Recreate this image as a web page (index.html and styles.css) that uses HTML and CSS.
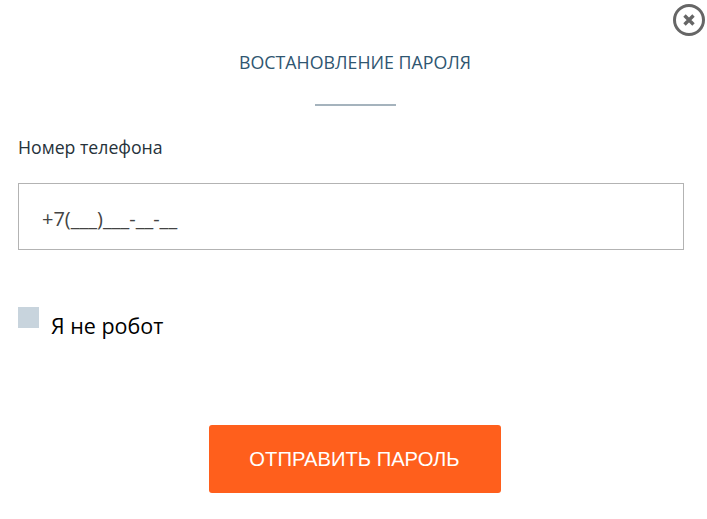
FILE: index.html
```html
<!DOCTYPE html>
<html lang="en">
<head>
	<meta charset="UTF-8">
	<title>Восстановление пароля</title>
	<link rel="stylesheet" href="styles.css">
</head>
<body>
	<div class="popup">
		<a class="close" href="#">
			<svg width="34" height="34" viewBox="0 0 34 34">
				<circle cx="17" cy="17" r="14.5" fill="none" stroke="#666" stroke-width="3"/>
				<path d="M12.5 12.5 L21.5 21.5 M21.5 12.5 L12.5 21.5" fill="none" stroke="#666" stroke-width="3.4"/>
			</svg>
		</a>
		<h2 class="title">ВОСТАНОВЛЕНИЕ ПАРОЛЯ</h2>
		<div class="line"></div>
		<label class="label">Номер телефона</label>
		<div class="field">+7(___)___-__-__</div>
		<div class="robot">
			<span class="check"></span>
			<span class="robot-text">Я не робот</span>
		</div>
		<div class="actions">
			<button class="send">ОТПРАВИТЬ ПАРОЛЬ</button>
		</div>
	</div>
</body>
</html>
```

FILE: styles.css
```css
* {
	margin: 0;
	padding: 0;
	box-sizing: border-box;
}
html, body {
	height: 100%;
	background: #fff;
	overflow: hidden;
}
.popup {
	position: relative;
	width: 707px;
	height: 519px;
	padding: 50px 14px 0 18px;
	font-family: "Open Sans", sans-serif;
}
.close {
	position: absolute;
	top: 3px;
	right: 1px;
	display: block;
	width: 34px;
	height: 34px;
}
.close svg {
	display: block;
}
.title {
	padding-right: 1px;
	font-size: 17.8px;
	line-height: 24px;
	font-weight: 400;
	color: #2f5671;
	text-align: center;
}
.line {
	width: 81px;
	height: 2px;
	margin: 30px auto 0;
	background: #a5b3bd;
}
.label {
	display: block;
	margin-top: 29px;
	font-size: 17.7px;
	line-height: 25px;
	color: #26323a;
}
.field {
	width: 666px;
	height: 67px;
	margin-top: 23px;
	padding-left: 23px;
	border: 1px solid #b3b3b3;
	font-size: 20px;
	line-height: 69px;
	color: #444;
}
.robot {
	display: flex;
	margin-top: 57px;
}
.check {
	width: 21px;
	height: 21px;
	background: #c8d4dd;
}
.robot-text {
	margin: 5px 0 0 12px;
	font-size: 21.5px;
	line-height: 27px;
	color: #000;
}
.actions {
	display: flex;
	justify-content: center;
	margin-top: 86px;
	padding-right: 2px;
}
.send {
	width: 292px;
	height: 68px;
	border: 0;
	border-radius: 3px;
	background: #ff5f1c;
	color: #fff;
	font-family: "Liberation Sans", sans-serif;
	font-size: 20.2px;
}
```
